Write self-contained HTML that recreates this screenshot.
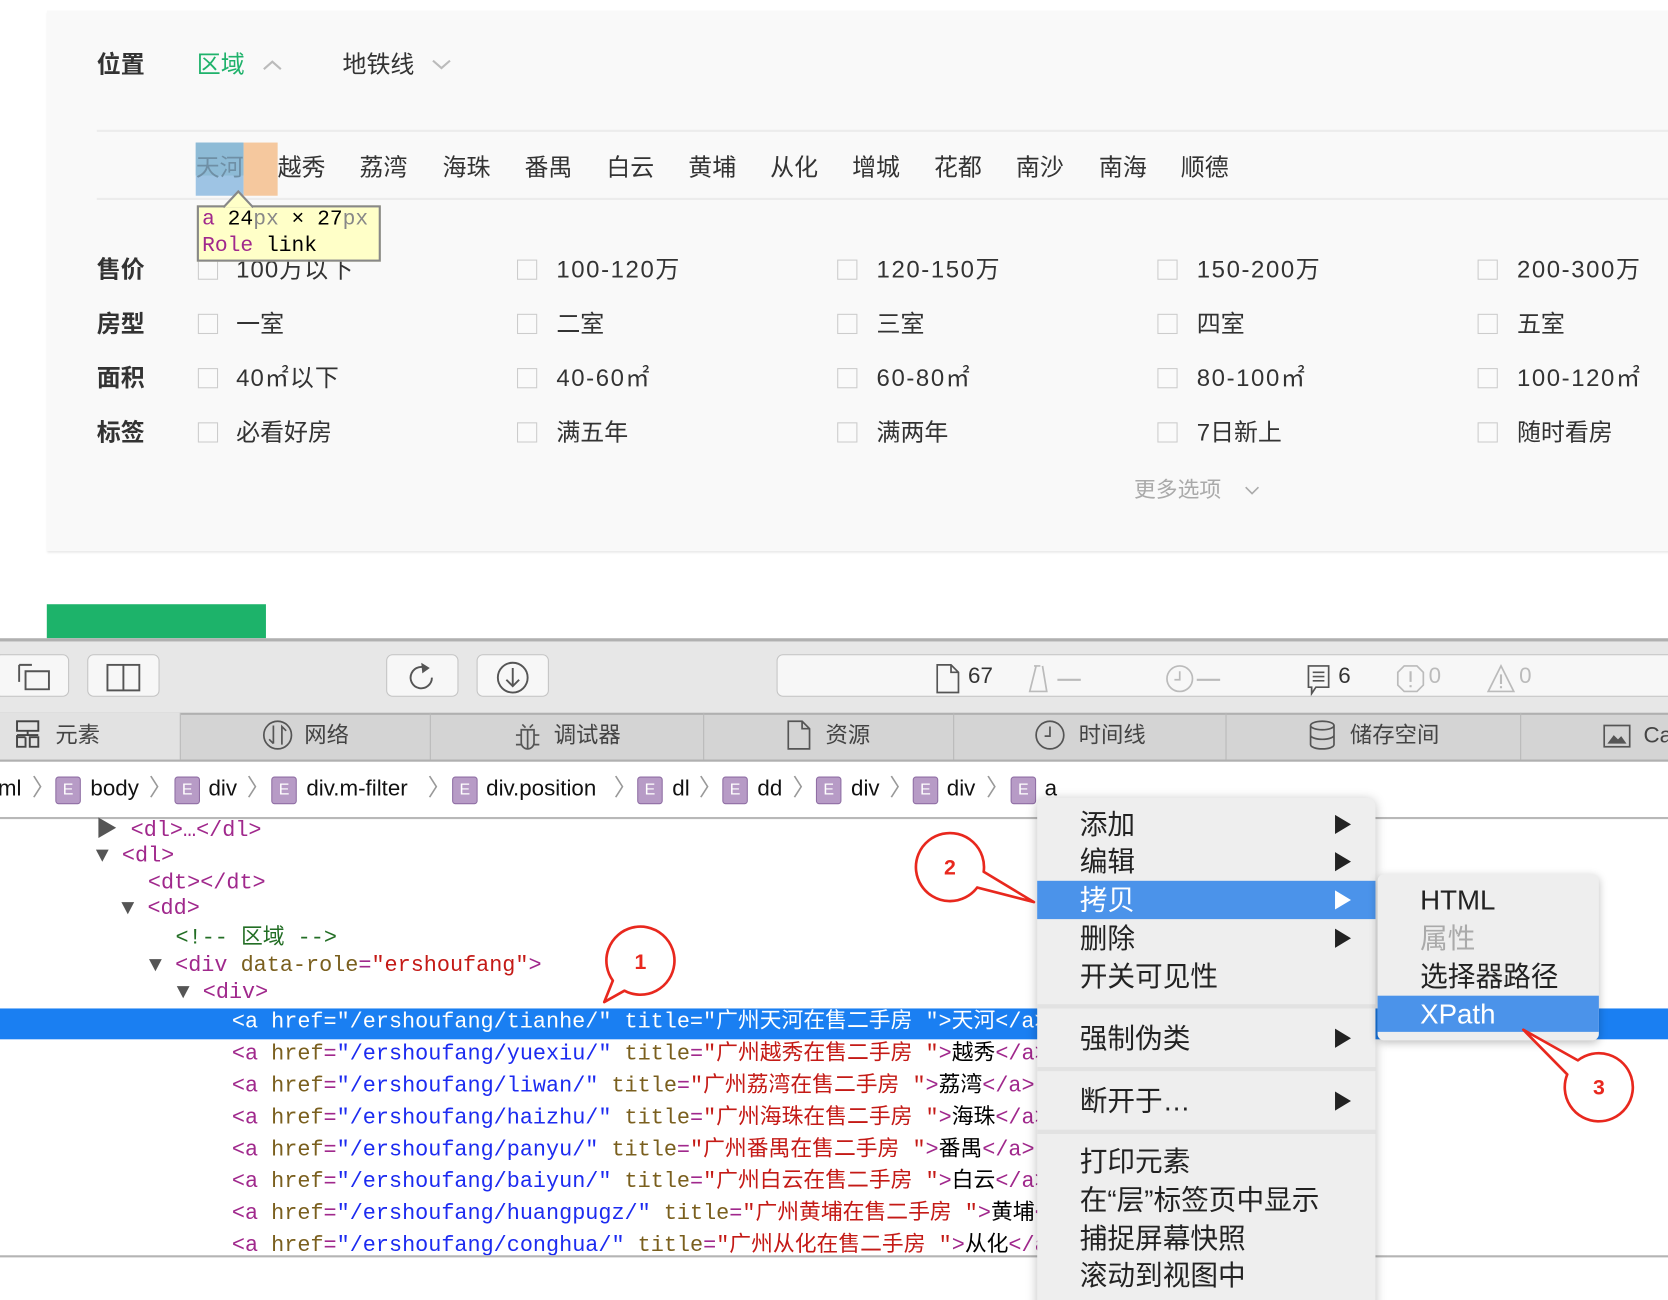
<!DOCTYPE html>
<html><head><meta charset="utf-8">
<style>
html,body{margin:0;padding:0;width:1668px;height:1300px;overflow:hidden;background:#fff}
#w{position:absolute;left:0;top:0;width:1568px;height:1222px;transform:scale(1.06378);transform-origin:0 0;font-family:"Liberation Sans","Noto Sans CJK SC",sans-serif;overflow:hidden}
.a{position:absolute;white-space:nowrap}
.t{font-size:22.5px;color:#333;line-height:30px}
.b{font-weight:bold;color:#333}
.cb{position:absolute;width:19px;height:19px;border:1px solid #ccc;background:#fafafa;box-sizing:border-box}
.m{font-family:"Liberation Mono","Noto Sans CJK SC",monospace;font-size:20.5px;line-height:26px}
.tg{color:#a0288c}.an{color:#7a5f1e}.av{color:#1c2bf0}.ar{color:#c41a16}
.mi{position:absolute;left:40px;font-size:26px;line-height:36px;color:#222}
.ar2{position:absolute;left:280px;width:0;height:0;border-left:15px solid #222;border-top:9px solid transparent;border-bottom:9px solid transparent}
.btn{position:absolute;top:15px;height:40px;background:#f7f7f7;border:1px solid #c4c4c4;border-radius:6px;box-sizing:border-box}
.tab{position:absolute;top:70px;height:44px;line-height:44px;font-size:21px;color:#444;text-align:center;border-right:1px solid #b8b8b8;box-sizing:border-box}
.e{position:absolute;top:130px;width:24px;height:26px;background:#b79bc6;border:1px solid #8f6ea4;color:#fff;font-size:15px;line-height:24px;text-align:center;border-radius:3px;box-sizing:border-box}
.bt{position:absolute;top:127px;font-size:21px;line-height:30px;color:#111}
.sp{position:absolute;top:126px;font-size:22px;line-height:30px;color:#999}
</style></head><body><div id="w">
<div class="a" style="left:44px;top:10px;width:1540px;height:508px;background:#f9f9f9;box-shadow:0 2px 2px #e8e8e8"></div>
<div class="a t b" style="left:91px;top:46px">位置</div>
<div class="a t" style="left:185px;top:46px;color:#1fb26b">区域</div>
<svg class="a" style="left:246px;top:55px" width="20" height="12"><path d="M2 10 L10 3 L18 10" stroke="#bbb" stroke-width="2" fill="none"/></svg>
<div class="a t" style="left:322px;top:46px">地铁线</div>
<svg class="a" style="left:405px;top:55px" width="20" height="12"><path d="M2 2 L10 9 L18 2" stroke="#bbb" stroke-width="2" fill="none"/></svg>
<div class="a" style="left:91px;top:122px;width:1480px;height:2px;background:#ececec"></div>
<div class="a" style="left:184px;top:134px;width:45px;height:50px;background:#9ec4e4"></div>
<div class="a" style="left:184px;top:134px;width:45px;height:31px;background:#8ebbd6"></div>
<div class="a" style="left:229px;top:134px;width:32px;height:50px;background:#f5c89e"></div>
<div class="a t" style="left:184px;top:143px;color:#6f8fa5">天河</div>
<div class="a t" style="left:261px;top:143px">越秀</div>
<div class="a t" style="left:338px;top:143px">荔湾</div>
<div class="a t" style="left:416px;top:143px">海珠</div>
<div class="a t" style="left:493px;top:143px">番禺</div>
<div class="a t" style="left:570px;top:143px">白云</div>
<div class="a t" style="left:647px;top:143px">黄埔</div>
<div class="a t" style="left:724px;top:143px">从化</div>
<div class="a t" style="left:801px;top:143px">增城</div>
<div class="a t" style="left:878px;top:143px">花都</div>
<div class="a t" style="left:955px;top:143px">南沙</div>
<div class="a t" style="left:1033px;top:143px">南海</div>
<div class="a t" style="left:1110px;top:143px">顺德</div>
<div class="a" style="left:91px;top:186px;width:1480px;height:2px;background:#ececec"></div>
<div class="a t b" style="left:91px;top:239px">售价</div>
<div class="a t b" style="left:91px;top:290px">房型</div>
<div class="a t b" style="left:91px;top:341px">面积</div>
<div class="a t b" style="left:91px;top:392px">标签</div>
<div class="cb" style="left:186px;top:244px"></div><div class="a t" style="left:222px;top:239px;letter-spacing:1px">100万以下</div>
<div class="cb" style="left:486px;top:244px"></div><div class="a t" style="left:523px;top:239px;letter-spacing:1.5px">100-120万</div>
<div class="cb" style="left:787px;top:244px"></div><div class="a t" style="left:824px;top:239px;letter-spacing:1.5px">120-150万</div>
<div class="cb" style="left:1088px;top:244px"></div><div class="a t" style="left:1125px;top:239px;letter-spacing:1.5px">150-200万</div>
<div class="cb" style="left:1389px;top:244px"></div><div class="a t" style="left:1426px;top:239px;letter-spacing:1.5px">200-300万</div>
<div class="cb" style="left:186px;top:295px"></div><div class="a t" style="left:222px;top:290px">一室</div>
<div class="cb" style="left:486px;top:295px"></div><div class="a t" style="left:523px;top:290px">二室</div>
<div class="cb" style="left:787px;top:295px"></div><div class="a t" style="left:824px;top:290px">三室</div>
<div class="cb" style="left:1088px;top:295px"></div><div class="a t" style="left:1125px;top:290px">四室</div>
<div class="cb" style="left:1389px;top:295px"></div><div class="a t" style="left:1426px;top:290px">五室</div>
<div class="cb" style="left:186px;top:346px"></div><div class="a t" style="left:222px;top:341px;letter-spacing:1px">40㎡以下</div>
<div class="cb" style="left:486px;top:346px"></div><div class="a t" style="left:523px;top:341px;letter-spacing:1.5px">40-60㎡</div>
<div class="cb" style="left:787px;top:346px"></div><div class="a t" style="left:824px;top:341px;letter-spacing:1.5px">60-80㎡</div>
<div class="cb" style="left:1088px;top:346px"></div><div class="a t" style="left:1125px;top:341px;letter-spacing:1.5px">80-100㎡</div>
<div class="cb" style="left:1389px;top:346px"></div><div class="a t" style="left:1426px;top:341px;letter-spacing:1.5px">100-120㎡</div>
<div class="cb" style="left:186px;top:397px"></div><div class="a t" style="left:222px;top:392px">必看好房</div>
<div class="cb" style="left:486px;top:397px"></div><div class="a t" style="left:523px;top:392px">满五年</div>
<div class="cb" style="left:787px;top:397px"></div><div class="a t" style="left:824px;top:392px">满两年</div>
<div class="cb" style="left:1088px;top:397px"></div><div class="a t" style="left:1125px;top:392px">7日新上</div>
<div class="cb" style="left:1389px;top:397px"></div><div class="a t" style="left:1426px;top:392px">随时看房</div>
<div class="a" style="left:1066px;top:447px;font-size:20.5px;color:#aaa;line-height:28px">更多选项</div>
<svg class="a" style="left:1170px;top:456px" width="14" height="10"><path d="M1 2 L7 8 L13 2" stroke="#aaa" stroke-width="1.5" fill="none"/></svg>
<div class="a" style="left:185px;top:193px;width:173px;height:53px;background:#ffffc8;border:2px solid #888;box-sizing:border-box"></div>
<svg class="a" style="left:210px;top:178px" width="30" height="18"><path d="M0 17 L14 2 L28 17" fill="#ffffc8" stroke="#888" stroke-width="2"/></svg>
<div class="a m" style="left:190px;top:194px;font-size:20px;line-height:25px"><span class="tg">a</span> 24<span style="color:#888">px</span> × 27<span style="color:#888">px</span><br><span class="tg">Role</span> link</div>
<div class="a" style="left:44px;top:568px;width:206px;height:40px;background:#1db36a"></div>
<div class="a" style="left:0;top:600px;width:1568px;height:622px;background:#fff">
 <div class="a" style="left:0;top:0;width:1568px;height:70px;background:#e7e7e7;border-top:3px solid #b0b0b0;box-sizing:border-box"></div>
 <div class="btn" style="left:-5px;width:70px"></div>
 <svg class="a" style="left:16px;top:23px" width="32" height="26"><path d="M2 2 H14 M2 2 V18 M8 8 H30 V25 H8 Z" stroke="#555" stroke-width="1.8" fill="none"/></svg>
 <div class="btn" style="left:82px;width:68px"></div>
 <svg class="a" style="left:100px;top:24px" width="32" height="26"><rect x="1" y="1" width="30" height="24" stroke="#555" stroke-width="1.8" fill="none"/><path d="M16 1 V25" stroke="#555" stroke-width="1.8"/></svg>
 <div class="btn" style="left:363px;width:68px"></div>
 <svg class="a" style="left:382px;top:20px" width="30" height="32"><path d="M20 9 A10 10 0 1 0 24 17" stroke="#555" stroke-width="1.8" fill="none"/><path d="M14 3 L22 8 L15 13 Z" fill="#555"/></svg>
 <div class="btn" style="left:448px;width:68px"></div>
 <svg class="a" style="left:466px;top:21px" width="32" height="32"><circle cx="16" cy="16" r="14" stroke="#555" stroke-width="1.8" fill="none"/><path d="M16 7 V24 M10 18 L16 24 L22 18" stroke="#555" stroke-width="1.8" fill="none"/></svg>
 <div class="btn" style="left:730px;width:860px"></div>
 <svg class="a" style="left:880px;top:24px" width="24" height="28"><path d="M1 1 H14 L21 8 V27 H1 Z M14 1 V8 H21" stroke="#555" stroke-width="1.6" fill="none"/></svg>
 <div class="a" style="left:910px;top:24px;font-size:21px;color:#333">67</div>
 <svg class="a" style="left:964px;top:24px" width="60" height="28"><path d="M8 2 H14 M10 2 L4 26 H20 L16 2" stroke="#bbb" stroke-width="1.6" fill="none"/><path d="M30 15 H52" stroke="#bbb" stroke-width="2"/></svg>
 <svg class="a" style="left:1095px;top:24px" width="60" height="28"><circle cx="14" cy="14" r="12" stroke="#bbb" stroke-width="1.6" fill="none"/><path d="M14 7 V15 H9" stroke="#bbb" stroke-width="1.6" fill="none"/><path d="M30 15 H52" stroke="#bbb" stroke-width="2"/></svg>
 <svg class="a" style="left:1228px;top:24px" width="24" height="30"><path d="M2 2 H21 V22 H9 L5 28 V22 H2 Z M6 8 H17 M6 12 H17 M6 16 H17" stroke="#555" stroke-width="1.6" fill="none"/></svg>
 <div class="a" style="left:1258px;top:24px;font-size:21px;color:#333">6</div>
 <svg class="a" style="left:1312px;top:24px" width="28" height="28"><path d="M8 2 H20 L26 8 V20 L20 26 H8 L2 20 V8 Z" stroke="#bbb" stroke-width="1.6" fill="none"/><path d="M14 7 V17 M14 20 V22" stroke="#bbb" stroke-width="2"/></svg>
 <div class="a" style="left:1343px;top:24px;font-size:21px;color:#bbb">0</div>
 <svg class="a" style="left:1397px;top:24px" width="28" height="28"><path d="M14 2 L26 26 H2 Z" stroke="#bbb" stroke-width="1.6" fill="none"/><path d="M14 10 V19 M14 21 V23" stroke="#bbb" stroke-width="2"/></svg>
 <div class="a" style="left:1428px;top:24px;font-size:21px;color:#bbb">0</div>
 <div class="a" style="left:0;top:70px;width:1568px;height:46px;background:#d4d4d4;border-top:2px solid #b0b0b0;border-bottom:2px solid #b0b0b0;box-sizing:border-box"></div>
 <div class="tab" style="left:0;width:170px;background:#e2e2e2;text-align:left;padding-left:12px"><svg style="vertical-align:-5px;margin-right:12px" width="28" height="26"><path d="M4 1 H24 V10 H4 Z M14 10 V14 M4 14 H24 M4 14 V25 H12 V16 M16 16 H24 V25 H16 Z M4 16 H12" stroke="#444" stroke-width="1.8" fill="none"/></svg>元素</div>
 <div class="tab" style="left:170px;width:235px"><svg style="vertical-align:-8px;margin-right:10px" width="30" height="30"><circle cx="15" cy="15" r="13" stroke="#555" stroke-width="1.6" fill="none"/><path d="M11 6 V23 M7 19 L11 23 M19 24 V7 L23 11" stroke="#555" stroke-width="1.6" fill="none"/></svg>网络</div>
 <div class="tab" style="left:405px;width:257px"><svg style="vertical-align:-8px;margin-right:12px" width="26" height="30"><path d="M8 5 L11 8 M18 5 L15 8 M7 10 H19 V22 A6 6 0 0 1 7 22 Z M13 10 V28 M2 15 H7 M19 15 H24 M2 24 H7 M19 24 H24" stroke="#555" stroke-width="1.6" fill="none"/></svg>调试器</div>
 <div class="tab" style="left:662px;width:235px"><svg style="vertical-align:-7px;margin-right:12px" width="24" height="28"><path d="M1 1 H14 L21 8 V27 H1 Z M14 1 V8 H21" stroke="#555" stroke-width="1.6" fill="none"/></svg>资源</div>
 <div class="tab" style="left:897px;width:256px"><svg style="vertical-align:-8px;margin-right:12px" width="30" height="30"><circle cx="15" cy="15" r="13" stroke="#555" stroke-width="1.6" fill="none"/><path d="M15 7 V16 H10" stroke="#555" stroke-width="1.6" fill="none"/></svg>时间线</div>
 <div class="tab" style="left:1153px;width:277px"><svg style="vertical-align:-8px;margin-right:12px" width="28" height="30"><ellipse cx="14" cy="6" rx="11" ry="4" stroke="#555" stroke-width="1.6" fill="none"/><path d="M3 6 V24 M25 6 V24 M3 15 A11 4 0 0 0 25 15 M3 24 A11 4 0 0 0 25 24" stroke="#555" stroke-width="1.6" fill="none"/></svg>储存空间</div>
 <div class="tab" style="left:1430px;width:200px;text-align:left;padding-left:77px;border:none"><svg style="vertical-align:-5px;margin-right:12px" width="26" height="22"><rect x="1" y="1" width="24" height="20" stroke="#555" stroke-width="1.6" fill="none"/><path d="M4 18 L10 10 L14 14 L17 11 L22 18 Z" fill="#555"/></svg>Ca</div>
 <div class="a" style="left:0;top:116px;width:1568px;height:54px;border-bottom:2px solid #b8b8b8;box-sizing:border-box"></div>
 <div class="bt" style="left:-2px">ml</div><div class="sp" style="left:30px">〉</div>
 <div class="e" style="left:52px">E</div><div class="bt" style="left:85px">body</div><div class="sp" style="left:140px">〉</div>
 <div class="e" style="left:164px">E</div><div class="bt" style="left:196px">div</div><div class="sp" style="left:232px">〉</div>
 <div class="e" style="left:255px">E</div><div class="bt" style="left:288px">div.m-filter</div><div class="sp" style="left:402px">〉</div>
 <div class="e" style="left:425px">E</div><div class="bt" style="left:457px">div.position</div><div class="sp" style="left:577px">〉</div>
 <div class="e" style="left:599px">E</div><div class="bt" style="left:632px">dl</div><div class="sp" style="left:657px">〉</div>
 <div class="e" style="left:679px">E</div><div class="bt" style="left:712px">dd</div><div class="sp" style="left:745px">〉</div>
 <div class="e" style="left:767px">E</div><div class="bt" style="left:800px">div</div><div class="sp" style="left:836px">〉</div>
 <div class="e" style="left:858px">E</div><div class="bt" style="left:890px">div</div><div class="sp" style="left:927px">〉</div>
 <div class="e" style="left:950px">E</div><div class="bt" style="left:982px">a</div>
 <div class="a" style="left:0;top:348px;width:1568px;height:29px;background:#1a7ff2"></div>
 <div class="a m" style="left:90px;top:169px;color:#555">▶ <span class="tg">&lt;dl&gt;…&lt;/dl&gt;</span></div>
 <div class="a m" style="left:90px;top:193px;color:#555">▼ <span class="tg">&lt;dl&gt;</span></div>
 <div class="a m" style="left:139px;top:218px"><span class="tg">&lt;dt&gt;&lt;/dt&gt;</span></div>
 <div class="a m" style="left:114px;top:242px;color:#555">▼ <span class="tg">&lt;dd&gt;</span></div>
 <div class="a m" style="left:165px;top:270px;color:#236e25">&lt;!-- 区域 --&gt;</div>
 <div class="a m" style="left:140px;top:296px;color:#555">▼ <span class="tg">&lt;div</span> <span class="an">data-role</span><span class="tg">=</span><span class="ar">"ershoufang"</span><span class="tg">&gt;</span></div>
 <div class="a m" style="left:166px;top:321px;color:#555">▼ <span class="tg">&lt;div&gt;</span></div>
 <div class="a m" style="left:218px;top:349px;color:#fff">&lt;a href="/ershoufang/tianhe/" title="广州天河在售二手房 "&gt;天河&lt;/a&gt;</div>
 <div class="a m" style="left:218px;top:379px"><span class="tg">&lt;a</span> <span class="an">href</span><span class="tg">=</span><span class="av">"/ershoufang/yuexiu/"</span> <span class="an">title</span><span class="tg">=</span><span class="ar">"广州越秀在售二手房 "</span><span class="tg">&gt;</span>越秀<span class="tg">&lt;/a&gt;</span></div>
 <div class="a m" style="left:218px;top:409px"><span class="tg">&lt;a</span> <span class="an">href</span><span class="tg">=</span><span class="av">"/ershoufang/liwan/"</span> <span class="an">title</span><span class="tg">=</span><span class="ar">"广州荔湾在售二手房 "</span><span class="tg">&gt;</span>荔湾<span class="tg">&lt;/a&gt;</span></div>
 <div class="a m" style="left:218px;top:439px"><span class="tg">&lt;a</span> <span class="an">href</span><span class="tg">=</span><span class="av">"/ershoufang/haizhu/"</span> <span class="an">title</span><span class="tg">=</span><span class="ar">"广州海珠在售二手房 "</span><span class="tg">&gt;</span>海珠<span class="tg">&lt;/a&gt;</span></div>
 <div class="a m" style="left:218px;top:469px"><span class="tg">&lt;a</span> <span class="an">href</span><span class="tg">=</span><span class="av">"/ershoufang/panyu/"</span> <span class="an">title</span><span class="tg">=</span><span class="ar">"广州番禺在售二手房 "</span><span class="tg">&gt;</span>番禺<span class="tg">&lt;/a&gt;</span></div>
 <div class="a m" style="left:218px;top:499px"><span class="tg">&lt;a</span> <span class="an">href</span><span class="tg">=</span><span class="av">"/ershoufang/baiyun/"</span> <span class="an">title</span><span class="tg">=</span><span class="ar">"广州白云在售二手房 "</span><span class="tg">&gt;</span>白云<span class="tg">&lt;/a&gt;</span></div>
 <div class="a m" style="left:218px;top:529px"><span class="tg">&lt;a</span> <span class="an">href</span><span class="tg">=</span><span class="av">"/ershoufang/huangpugz/"</span> <span class="an">title</span><span class="tg">=</span><span class="ar">"广州黄埔在售二手房 "</span><span class="tg">&gt;</span>黄埔<span class="tg">&lt;/a&gt;</span></div>
 <div class="a m" style="left:218px;top:559px"><span class="tg">&lt;a</span> <span class="an">href</span><span class="tg">=</span><span class="av">"/ershoufang/conghua/"</span> <span class="an">title</span><span class="tg">=</span><span class="ar">"广州从化在售二手房 "</span><span class="tg">&gt;</span>从化<span class="tg">&lt;/a&gt;</span></div>
 <div class="a" style="left:0;top:580px;width:1568px;height:42px;background:#fff;border-top:2px solid #b4b4b4"></div>
</div>
<div class="a" style="left:975px;top:750px;width:318px;height:490px;background:#eeeeee;border-radius:8px;box-shadow:0 2px 10px rgba(0,0,0,.25)">
 <div class="mi" style="top:7px">添加</div><div class="ar2" style="top:16px"></div>
 <div class="mi" style="top:42px">编辑</div><div class="ar2" style="top:51px"></div>
 <div class="a" style="left:0;top:78px;width:318px;height:36px;background:#4b93ea"></div>
 <div class="mi" style="top:78px;color:#fff">拷贝</div><div class="ar2" style="top:87px;border-left-color:#fff"></div>
 <div class="mi" style="top:114px">删除</div><div class="ar2" style="top:123px"></div>
 <div class="mi" style="top:150px">开关可见性</div>
 <div class="a" style="left:0;top:194px;width:318px;height:4px;background:#e2e2e2"></div>
 <div class="mi" style="top:208px">强制伪类</div><div class="ar2" style="top:217px"></div>
 <div class="a" style="left:0;top:253px;width:318px;height:4px;background:#e2e2e2"></div>
 <div class="mi" style="top:267px">断开于…</div><div class="ar2" style="top:276px"></div>
 <div class="a" style="left:0;top:312px;width:318px;height:4px;background:#e2e2e2"></div>
 <div class="mi" style="top:324px">打印元素</div>
 <div class="mi" style="top:360px">在“层”标签页中显示</div>
 <div class="mi" style="top:396px">捕捉屏幕快照</div>
 <div class="mi" style="top:431px">滚动到视图中</div>
</div>
<div class="a" style="left:1295px;top:822px;width:208px;height:156px;background:#eeeeee;border-radius:6px;box-shadow:0 2px 8px rgba(0,0,0,.25)">
 <div class="mi" style="top:6px">HTML</div>
 <div class="mi" style="top:42px;color:#aaa">属性</div>
 <div class="mi" style="top:78px">选择器路径</div>
 <div class="a" style="left:0;top:114px;width:208px;height:34px;background:#4b93ea"></div>
 <div class="mi" style="top:113px;color:#fff">XPath</div>
</div>
<svg class="a" style="left:0;top:0" width="1568" height="1222">
 <g fill="#fff" stroke="#e8281e" stroke-width="2.5" stroke-linejoin="round">
  <path d="M587 931.3 L568 942 L576.1 921.8 A32 32 0 1 1 587 931.3 Z"/>
  <path d="M918.6 834.3 L972 848 L924.7 819.5 A32 32 0 1 0 918.6 834.3 Z"/>
  <path d="M1473.3 1010 L1432 968 L1483.3 996.8 A32 32 0 1 1 1473.3 1010 Z"/>
 </g>
 <g fill="#e8281e" font-family="Liberation Sans" font-weight="bold" font-size="20" text-anchor="middle">
  <text x="602" y="911">1</text><text x="893" y="822">2</text><text x="1503" y="1029">3</text>
 </g>
</svg>
</div></body></html>
